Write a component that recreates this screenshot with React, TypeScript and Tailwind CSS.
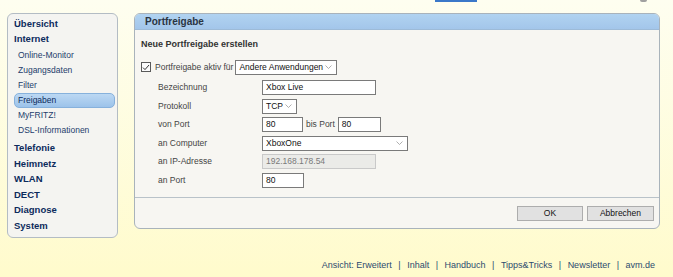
const font = { fontFamily: '"Liberation Sans", Arial, sans-serif' };

function Chevron() {
  return (
    <svg width="7" height="4" viewBox="0 0 7 4" className="ml-auto mr-[4px] shrink-0">
      <path d="M0.5 0.5 L3.5 3.5 L6.5 0.5" fill="none" stroke="#9a9a9a" strokeWidth="0.8" />
    </svg>
  );
}

function Select({ value, w }: { value: string; w: string }) {
  return (
    <div className={`${w} h-[15px] flex items-center bg-white border border-[#7a7a7a] pl-[3px] text-[8.5px] text-[#111]`}>
      {value}
      <Chevron />
    </div>
  );
}

function Input({ value, w, disabled }: { value: string; w: string; disabled?: boolean }) {
  return (
    <div
      className={`${w} h-[15px] flex items-center pl-[3px] text-[8.5px] border ${
        disabled ? "bg-[#ebebe8] border-[#c9c9c9] text-[#7a7a7a]" : "bg-white border-[#7a7a7a] text-[#111]"
      }`}
    >
      {value}
    </div>
  );
}

function Row({ label, children }: { label: string; children: React.ReactNode }) {
  return (
    <div className="h-[18.5px] flex items-center">
      <div className="w-[121px] pl-[17px] text-[8.5px] text-[#444]">{label}</div>
      {children}
    </div>
  );
}

const BOLD_TOP = ["Übersicht", "Internet"];
const SUB = ["Online-Monitor", "Zugangsdaten", "Filter", "Freigaben", "MyFRITZ!", "DSL-Informationen"];
const BOLD_BOTTOM = ["Telefonie", "Heimnetz", "WLAN", "DECT", "Diagnose", "System"];
const LINKS = ["Ansicht: Erweitert", "Inhalt", "Handbuch", "Tipps&Tricks", "Newsletter", "avm.de"];

export default function App() {
  return (
    <div style={font} className="w-[673px] h-[277px] overflow-hidden bg-gradient-to-b from-[#fefef0] to-[#fffbcc]">
      {/* cut-off bits of the page above */}
      <div className="h-[2px] flex">
        <div className="ml-[435px] w-[42px] h-[2px] bg-[#3b78c9]" />
        <div className="ml-[163px] w-[7px] h-[2px] rounded-b-full bg-[#a0a0a0]" />
      </div>

      <div className="flex items-start pt-[11px] pl-[7px]">
        {/* Sidebar */}
        <div className="w-[111px] h-[225px] rounded-[6px] border border-[#b3bcc4] bg-[#f4f4f1] pt-[2px] pl-[6px] pr-[2px]">
          {BOLD_TOP.map((t) => (
            <div key={t} className="h-[15px] leading-[15px] text-[9.5px] font-bold text-[#0c2b5c]">{t}</div>
          ))}
          <div className="mt-[1.5px]">
            {SUB.map((t) =>
              t === "Freigaben" ? (
                <div
                  key={t}
                  className="h-[15px] leading-[13px] px-[3px] text-[8.5px] text-[#0c2b5c] rounded-[5px] border border-[#86b1dc] bg-gradient-to-b from-[#bcd8f3] to-[#9cc3ea]"
                >
                  {t}
                </div>
              ) : (
                <div key={t} className="h-[15px] leading-[15px] px-[4px] text-[8.5px] text-[#1d3d6c]">{t}</div>
              )
            )}
          </div>
          <div className="mt-[2.5px]">
            {BOLD_BOTTOM.map((t) => (
              <div key={t} className="h-[15.5px] leading-[15.5px] text-[9.5px] font-bold text-[#0c2b5c]">{t}</div>
            ))}
          </div>
        </div>

        {/* Main panel */}
        <div className="ml-[16px] w-[526px] h-[216px] rounded-[6px] border border-[#a9b3bb] bg-[#f7f6f2] overflow-hidden flex flex-col">
          <div className="h-[16px] shrink-0 flex items-center pl-[10px] bg-gradient-to-b from-[#b1d3f1] to-[#a3c6ea] border-b border-[#9dbbd8] text-[10px] font-bold text-[#2a3442]">
            Portfreigabe
          </div>

          <div className="h-[167px] shrink-0 pl-[6px]">
            <div className="mt-[8px] h-[12px] leading-[12px] text-[9px] font-bold text-[#333]">Neue Portfreigabe erstellen</div>

            <div className="mt-[9px] h-[16px] flex items-center">
              <div className="w-[10px] h-[10px] border border-[#5a5a5a] bg-[#fbfbfb] flex items-center justify-center">
                <svg width="8" height="7" viewBox="0 0 8 7">
                  <path d="M1 3.6 L3 5.6 L7 1" fill="none" stroke="#333" strokeWidth="1" />
                </svg>
              </div>
              <span className="ml-[4px] text-[8.5px] text-[#444]">Portfreigabe aktiv für</span>
              <div className="ml-[2px]">
                <Select value="Andere Anwendungen" w="w-[102px]" />
              </div>
            </div>

            <div className="mt-[3.25px]">
              <Row label="Bezeichnung">
                <Input value="Xbox Live" w="w-[114px]" />
              </Row>
              <Row label="Protokoll">
                <Select value="TCP" w="w-[35px]" />
              </Row>
              <Row label="von Port">
                <Input value="80" w="w-[41px]" />
                <span className="ml-[3px] text-[8.5px] text-[#444]">bis Port</span>
                <div className="ml-[3px]">
                  <Input value="80" w="w-[43px]" />
                </div>
              </Row>
              <Row label="an Computer">
                <Select value="XboxOne" w="w-[146px]" />
              </Row>
              <Row label="an IP-Adresse">
                <Input value="192.168.178.54" w="w-[114px]" disabled />
              </Row>
              <Row label="an Port">
                <Input value="80" w="w-[42px]" />
              </Row>
            </div>
          </div>

          <div className="h-[31px] shrink-0 border-t border-[#b9c2c9] flex items-center justify-end gap-[4px] pr-[5px]">
            <button className="w-[66px] h-[15px] bg-[#e1e1e1] border border-[#adadad] text-[8.5px] text-[#111]">OK</button>
            <button className="w-[67px] h-[15px] bg-[#e1e1e1] border border-[#adadad] text-[8.5px] text-[#111]">Abbrechen</button>
          </div>
        </div>
      </div>

      {/* Footer links */}
      <div className="mt-[21px] h-[12px] leading-[12px] flex justify-end pr-[18px] text-[9px] text-[#2d4b6e]">
        {LINKS.map((l, i) => (
          <span key={l} className="flex">
            {i > 0 && <span className="px-[6.5px]">|</span>}
            <span>{l}</span>
          </span>
        ))}
      </div>
    </div>
  );
}
